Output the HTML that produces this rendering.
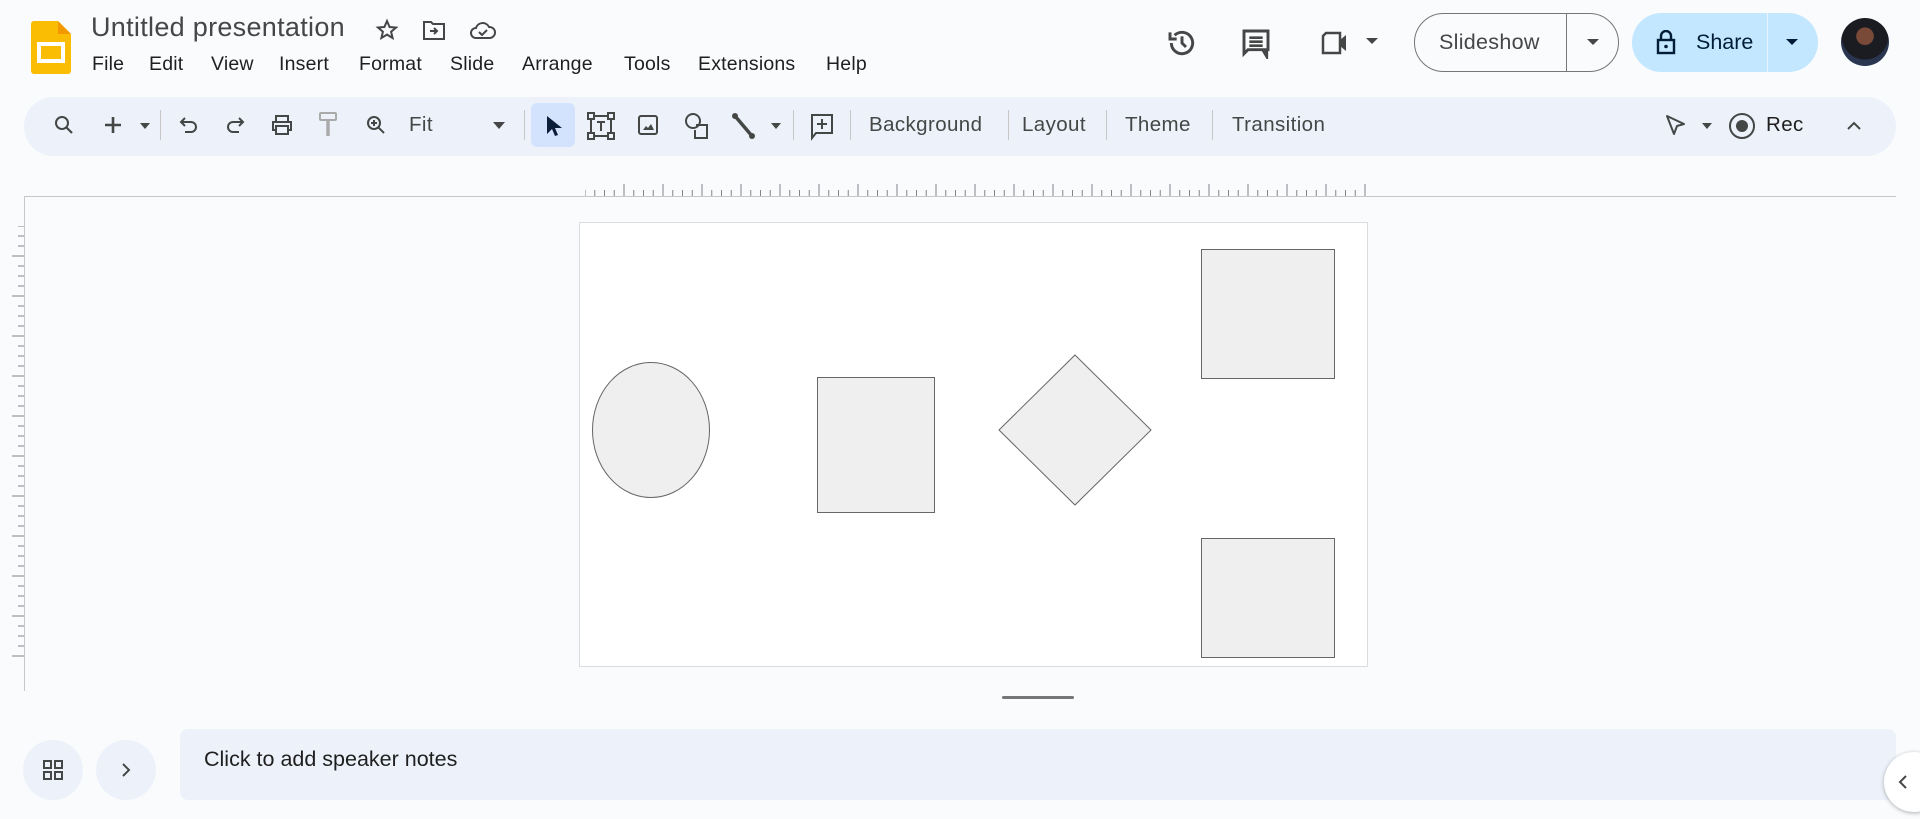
<!DOCTYPE html>
<html><head><meta charset="utf-8"><style>
*{margin:0;padding:0;box-sizing:border-box}
body{width:1920px;height:819px;background:#f9fbfd;font-family:"Liberation Sans",sans-serif;color:#1f1f1f;position:relative;overflow:hidden}
.a{position:absolute}
.menu span{position:absolute;top:53px;font-size:19.5px;color:#1f1f1f;letter-spacing:0.2px}
.tb{position:absolute;left:24px;top:97px;width:1872px;height:59px;background:#edf2fa;border-radius:30px}
.t{position:absolute;font-size:20.5px;color:#444746;top:113px;letter-spacing:0.4px}
.sep{position:absolute;top:110px;width:1px;height:30px;background:#c7c7c7}
svg.i{position:absolute}
</style></head><body>
<svg class="i" style="left:31px;top:21px" width="40" height="53" viewBox="0 0 40 53"><path d="M3 0h24l13 13v37a3 3 0 0 1-3 3H3a3 3 0 0 1-3-3V3a3 3 0 0 1 3-3z" fill="#fbbc04"/><path d="M27 0l13 13H27z" fill="#f29900"/><rect x="6" y="21" width="28" height="21" fill="#fff"/><rect x="10" y="25" width="20" height="13" fill="#fbbc04"/></svg>
<div class="a" style="left:91px;top:12px;font-size:27px;color:#444746;letter-spacing:0.3px">Untitled presentation</div>
<svg class="i" style="left:375px;top:18px" width="24" height="24" viewBox="0 0 24 24"><path d="M12 3l2.6 6 6.4.5-4.9 4.2 1.5 6.3L12 16.6 6.4 20l1.5-6.3L3 9.5l6.4-.5z" fill="none" stroke="#444746" stroke-width="2"/></svg>
<svg class="i" style="left:422px;top:19px" width="24" height="22" viewBox="0 0 24 22"><path d="M2 3h7l2 2h11v15H2z" fill="none" stroke="#444746" stroke-width="2"/><path d="M8 12h7M12 9l3 3-3 3" stroke="#444746" stroke-width="2" fill="none"/></svg>
<svg class="i" style="left:469px;top:19px" width="28" height="22" viewBox="0 0 28 22"><path d="M7 19a5 5 0 0 1 0-10 7 7 0 0 1 13-1 5.5 5.5 0 0 1 1 11z" fill="none" stroke="#444746" stroke-width="2"/><path d="M10 13l3 3 5-5" stroke="#444746" stroke-width="2" fill="none"/></svg>
<div class="menu"><span style="left:92px">File</span><span style="left:149px">Edit</span><span style="left:211px">View</span><span style="left:279px">Insert</span><span style="left:359px">Format</span><span style="left:450px">Slide</span><span style="left:522px">Arrange</span><span style="left:624px">Tools</span><span style="left:698px">Extensions</span><span style="left:826px">Help</span></div>
<svg class="i" style="left:1166px;top:27px" width="32" height="32" viewBox="0 0 24 24"><path d="M4 12a8 8 0 1 0 2.5-5.8" fill="none" stroke="#444746" stroke-width="2.2"/><path d="M3 4v5h5" fill="none" stroke="#444746" stroke-width="2.2"/><path d="M12 7v5l3 3" fill="none" stroke="#444746" stroke-width="2.2"/></svg>
<svg class="i" style="left:1240px;top:27px" width="32" height="32" viewBox="0 0 24 24"><path d="M3 3h18v14H6l-3 3V3z M20 17v5l-3-5" fill="none" stroke="#444746" stroke-width="2.2"/><path d="M7 8h10M7 11h10M7 14h10" stroke="#444746" stroke-width="2"/></svg>
<svg class="i" style="left:1320px;top:30px" width="32" height="26" viewBox="0 0 32 26"><path d="M6 3h14v20H3V6z" fill="none" stroke="#444746" stroke-width="2.5"/><path d="M20 10l6-5v16l-6-5z" fill="#444746"/></svg>
<div class="a" style="left:1366px;top:38px;border:6px solid transparent;border-top:6px solid #444746;border-bottom:0;width:0"></div>
<div class="a" style="left:1414px;top:13px;width:205px;height:59px;border:1px solid #747775;border-radius:30px"></div>
<div class="a" style="left:1566px;top:13px;width:1px;height:59px;background:#747775"></div>
<div class="a" style="left:1439px;top:30px;font-size:21.5px;color:#444746;letter-spacing:0.3px">Slideshow</div>
<div class="a" style="left:1587px;top:39px;border:6px solid transparent;border-top:6px solid #444746;border-bottom:0;width:0"></div>
<div class="a" style="left:1632px;top:13px;width:186px;height:59px;background:#c2e7ff;border-radius:30px"></div>
<div class="a" style="left:1767px;top:13px;width:1px;height:59px;background:#e8f4ff"></div>
<svg class="i" style="left:1656px;top:30px" width="20" height="25" viewBox="0 0 20 25"><rect x="2" y="10" width="16" height="13" fill="none" stroke="#001d35" stroke-width="2.4"/><path d="M5 10V6a5 5 0 0 1 10 0v4" fill="none" stroke="#001d35" stroke-width="2.4"/><circle cx="10" cy="16.5" r="1.8" fill="#001d35"/></svg>
<div class="a" style="left:1696px;top:30px;font-size:21.5px;color:#001d35">Share</div>
<div class="a" style="left:1786px;top:39px;border:6px solid transparent;border-top:6px solid #001d35;border-bottom:0;width:0"></div>
<div class="a" style="left:1841px;top:18px;width:48px;height:48px;border-radius:50%;background:radial-gradient(circle at 50% 38%,#7a4a38 0 22%,#1b1b22 24% 60%,#2a3550 62%);"></div>
<div class="tb"></div>
<svg class="i" style="left:52px;top:113px" width="24" height="24" viewBox="0 0 24 24"><circle cx="10" cy="10" r="6" fill="none" stroke="#444746" stroke-width="2"/><path d="M14.5 14.5L20 20" stroke="#444746" stroke-width="2.2"/></svg>
<svg class="i" style="left:102px;top:114px" width="22" height="22" viewBox="0 0 22 22"><path d="M11 3v16M3 11h16" stroke="#444746" stroke-width="2.6"/></svg>
<div class="a" style="left:140px;top:123px;border:5px solid transparent;border-top:6px solid #444746;border-bottom:0"></div>
<div class="sep" style="left:160px"></div>
<svg class="i" style="left:178px;top:114px" width="22" height="24" viewBox="0 0 22 24"><path d="M7 4L3 8l4 4M3 8h10a5 5 0 0 1 0 10H7" fill="none" stroke="#444746" stroke-width="2"/></svg>
<svg class="i" style="left:224px;top:114px" width="22" height="24" viewBox="0 0 22 24"><path d="M15 4l4 4-4 4M19 8H9a5 5 0 0 0 0 10h6" fill="none" stroke="#444746" stroke-width="2"/></svg>
<svg class="i" style="left:270px;top:113px" width="24" height="24" viewBox="0 0 24 24"><path d="M6 8V3h12v5M6 17H3V9h18v8h-3M6 13h12v8H6z" fill="none" stroke="#444746" stroke-width="2"/></svg>
<svg class="i" style="left:317px;top:111px" width="22" height="28" viewBox="0 0 22 28"><rect x="3" y="2" width="16" height="7" rx="1" fill="none" stroke="#a8abaa" stroke-width="2"/><path d="M11 9v4H11v12" stroke="#a8abaa" stroke-width="3.5" fill="none"/></svg>
<svg class="i" style="left:364px;top:113px" width="24" height="24" viewBox="0 0 24 24"><circle cx="10" cy="10" r="6" fill="none" stroke="#444746" stroke-width="2"/><path d="M14.5 14.5L20 20M7 10h6M10 7v6" stroke="#444746" stroke-width="2"/></svg>
<div class="t" style="left:409px">Fit</div>
<div class="a" style="left:493px;top:122px;border:6px solid transparent;border-top:7px solid #444746;border-bottom:0"></div>
<div class="sep" style="left:524px"></div>
<div class="a" style="left:531px;top:103px;width:44px;height:44px;background:#d3e3fd;border-radius:6px"></div>
<svg class="i" style="left:541px;top:113px" width="24" height="26" viewBox="0 0 24 26"><path d="M6 3v18l5-5 3 7 3-1-3-7h7z" fill="#0b1f3a"/></svg>
<svg class="i" style="left:587px;top:112px" width="28" height="28" viewBox="0 0 28 28"><rect x="4" y="4" width="20" height="20" fill="none" stroke="#444746" stroke-width="2"/><rect x="1" y="1" width="6" height="6" fill="#edf2fa" stroke="#444746" stroke-width="2"/><rect x="21" y="1" width="6" height="6" fill="#edf2fa" stroke="#444746" stroke-width="2"/><rect x="1" y="21" width="6" height="6" fill="#edf2fa" stroke="#444746" stroke-width="2"/><rect x="21" y="21" width="6" height="6" fill="#edf2fa" stroke="#444746" stroke-width="2"/><path d="M10 10h8M14 10v9" stroke="#444746" stroke-width="2"/></svg>
<svg class="i" style="left:636px;top:113px" width="24" height="24" viewBox="0 0 24 24"><rect x="3" y="3" width="18" height="18" rx="2" fill="none" stroke="#444746" stroke-width="2"/><path d="M7 17l3-4 2 2 3-4 3 6z" fill="#444746"/></svg>
<svg class="i" style="left:684px;top:112px" width="26" height="28" viewBox="0 0 26 28"><circle cx="9" cy="9" r="7" fill="none" stroke="#444746" stroke-width="2"/><path d="M12 13h11v13H11v-8" fill="none" stroke="#444746" stroke-width="2"/></svg>
<svg class="i" style="left:731px;top:112px" width="26" height="28" viewBox="0 0 26 28"><path d="M4 4l17 20" stroke="#444746" stroke-width="3.5"/><circle cx="4" cy="4" r="3" fill="#444746"/><circle cx="21" cy="24" r="3" fill="#444746"/></svg>
<div class="a" style="left:771px;top:123px;border:5px solid transparent;border-top:6px solid #444746;border-bottom:0"></div>
<div class="sep" style="left:793px"></div>
<svg class="i" style="left:809px;top:112px" width="26" height="30" viewBox="0 0 26 30"><path d="M3 3h20v18H7l-4 5z" fill="none" stroke="#444746" stroke-width="2"/><path d="M13 7v10M8 12h10" stroke="#444746" stroke-width="2"/></svg>
<div class="sep" style="left:850px"></div>
<div class="t" style="left:869px">Background</div>
<div class="sep" style="left:1008px"></div>
<div class="t" style="left:1022px">Layout</div>
<div class="sep" style="left:1106px"></div>
<div class="t" style="left:1125px">Theme</div>
<div class="sep" style="left:1212px"></div>
<div class="t" style="left:1232px">Transition</div>
<svg class="i" style="left:1664px;top:113px" width="24" height="26" viewBox="0 0 24 26"><path d="M3 3l17 8-7 2-3 8z" fill="none" stroke="#444746" stroke-width="2" stroke-linejoin="round"/></svg>
<div class="a" style="left:1702px;top:123px;border:5px solid transparent;border-top:6px solid #444746;border-bottom:0"></div>
<div class="a" style="left:1729px;top:113px;width:26px;height:26px;border:2.5px solid #444746;border-radius:50%"></div>
<div class="a" style="left:1736px;top:120px;width:12px;height:12px;background:#444746;border-radius:50%"></div>
<div class="t" style="left:1766px;color:#1f1f1f">Rec</div>
<svg class="i" style="left:1845px;top:118px" width="18" height="14" viewBox="0 0 18 14"><path d="M3 11l6-6 6 6" fill="none" stroke="#444746" stroke-width="2"/></svg>
<div class="a" style="left:24px;top:196px;width:1872px;height:1px;background:#c7c7c7"></div>
<div class="a" style="left:24px;top:196px;width:1px;height:495px;background:#c7c7c7"></div>
<svg class="i" style="left:585px;top:181px" width="782" height="15"><g stroke="#80868b" stroke-width="1">
<path d="M0 15V9M9.75 15V9M19.5 15V9M29.25 15V9M39 15V3M48.75 15V9M58.5 15V9M68.25 15V9M78 15V3M87.75 15V9M97.5 15V9M107.25 15V9M117 15V3M126.75 15V9M136.5 15V9M146.25 15V9M156 15V3M165.75 15V9M175.5 15V9M185.25 15V9M195 15V3M204.75 15V9M214.5 15V9M224.25 15V9M234 15V3M243.75 15V9M253.5 15V9M263.25 15V9M273 15V3M282.75 15V9M292.5 15V9M302.25 15V9M312 15V3M321.75 15V9M331.5 15V9M341.25 15V9M351 15V3M360.75 15V9M370.5 15V9M380.25 15V9M390 15V3M399.75 15V9M409.5 15V9M419.25 15V9M429 15V3M438.75 15V9M448.5 15V9M458.25 15V9M468 15V3M477.75 15V9M487.5 15V9M497.25 15V9M507 15V3M516.75 15V9M526.5 15V9M536.25 15V9M546 15V3M555.75 15V9M565.5 15V9M575.25 15V9M585 15V3M594.75 15V9M604.5 15V9M614.25 15V9M624 15V3M633.75 15V9M643.5 15V9M653.25 15V9M663 15V3M672.75 15V9M682.5 15V9M692.25 15V9M702 15V3M711.75 15V9M721.5 15V9M731.25 15V9M741 15V3M750.75 15V9M760.5 15V9M770.25 15V9M780 15V3"/></g></svg>
<svg class="i" style="left:12px;top:226px" width="12" height="442"><g stroke="#80868b" stroke-width="1">
<path d="M6 0h6M6 10h6M6 20h6M0 30h12M6 40h6M6 50h6M6 60h6M0 70h12M6 80h6M6 90h6M6 100h6M0 110h12M6 120h6M6 130h6M6 140h6M0 150h12M6 160h6M6 170h6M6 180h6M0 190h12M6 200h6M6 210h6M6 220h6M0 230h12M6 240h6M6 250h6M6 260h6M0 270h12M6 280h6M6 290h6M6 300h6M0 310h12M6 320h6M6 330h6M6 340h6M0 350h12M6 360h6M6 370h6M6 380h6M0 390h12M6 400h6M6 410h6M6 420h6M0 430h12"/></g></svg>
<div class="a" style="left:579px;top:222px;width:789px;height:445px;background:#fff;border:1px solid #dadce0"></div>
<svg class="i" style="left:579px;top:222px" width="789" height="445">
<ellipse cx="72" cy="208" rx="58.5" ry="67.5" fill="#efefef" stroke="#666" stroke-width="1"/>
<rect x="238.5" y="155.5" width="117" height="135" fill="#efefef" stroke="#666"/>
<polygon points="496,133 572,208 496,283 420,208" fill="#efefef" stroke="#666"/>
<rect x="622.5" y="27.5" width="133" height="129" fill="#efefef" stroke="#666"/>
<rect x="622.5" y="316.5" width="133" height="119" fill="#efefef" stroke="#666"/>
</svg>
<div class="a" style="left:1002px;top:696px;width:72px;height:3px;background:#747775;border-radius:2px"></div>
<div class="a" style="left:23px;top:740px;width:60px;height:60px;border-radius:50%;background:#edf2fa"></div>
<svg class="i" style="left:42px;top:759px" width="22" height="22" viewBox="0 0 22 22"><g fill="none" stroke="#444746" stroke-width="2"><rect x="2" y="2" width="7" height="7"/><rect x="13" y="2" width="7" height="7"/><rect x="2" y="13" width="7" height="7"/><rect x="13" y="13" width="7" height="7"/></g></svg>
<div class="a" style="left:96px;top:740px;width:60px;height:60px;border-radius:50%;background:#edf2fa"></div>
<svg class="i" style="left:118px;top:762px" width="16" height="16" viewBox="0 0 16 16"><path d="M5 2l6 6-6 6" fill="none" stroke="#444746" stroke-width="2"/></svg>
<div class="a" style="left:180px;top:729px;width:1716px;height:71px;background:#edf2fa;border-radius:8px"></div>
<div class="a" style="left:204px;top:747px;font-size:21.5px;color:#1f1f1f">Click to add speaker notes</div>
<div class="a" style="left:1884px;top:752px;width:60px;height:60px;border-radius:50%;background:#fff;box-shadow:0 1px 4px rgba(0,0,0,.3)"></div>
<svg class="i" style="left:1896px;top:774px" width="14" height="16" viewBox="0 0 14 16"><path d="M10 2L4 8l6 6" fill="none" stroke="#444746" stroke-width="2"/></svg>
</body></html>
